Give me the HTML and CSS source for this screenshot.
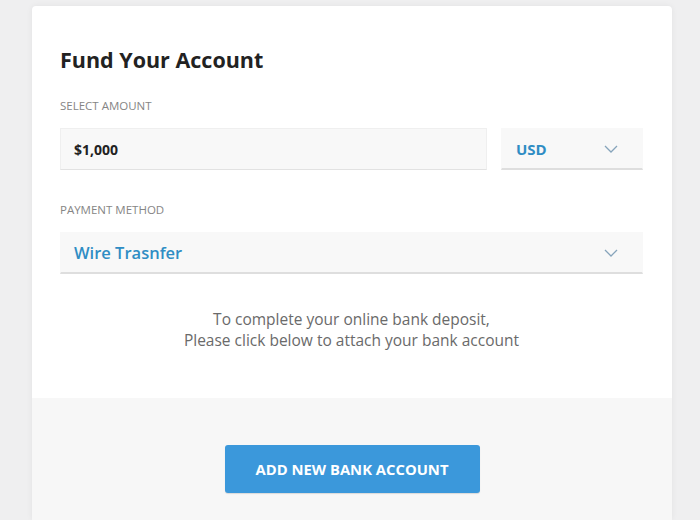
FILE: index.html
```html
<!DOCTYPE html>
<html lang="en">
<head>
    <meta charset="UTF-8">
    <meta name="viewport" content="width=device-width, initial-scale=1.0">
    <title>Fund Your Account</title>
    <link rel="stylesheet" href="styles.css">
</head>
<body>

    <div class="card">
        <div class="card-body">
            <h2 class="title">Fund Your Account</h2>

            <label class="field-label">Select Amount</label>
            <div class="amount-row">
                <div class="input-box amount">$1,000</div>
                <div class="input-box select currency">
                    <span>USD</span>
                    <svg class="chevron" width="14" height="8" viewBox="0 0 14 8"><path d="M1 1l6 6 6-6" fill="none" stroke="#86a4bb" stroke-width="1.3"/></svg>
                </div>
            </div>

            <label class="field-label">Payment Method</label>
            <div class="input-box select method">
                <span>Wire Trasnfer</span>
                <svg class="chevron" width="14" height="8" viewBox="0 0 14 8"><path d="M1 1l6 6 6-6" fill="none" stroke="#86a4bb" stroke-width="1.3"/></svg>
            </div>

            <p class="note">To complete your online bank deposit,<br>Please click below to attach your bank account</p>
        </div>

        <div class="card-footer">
            <button class="add-btn">ADD NEW BANK ACCOUNT</button>
        </div>
    </div>

</body>
</html>
```

FILE: styles.css
```css
body {
    font-family: "Open Sans", Arial, sans-serif;
    background-color: #efeff0;
    margin: 0;
    height: 520px;
    overflow: hidden;
}
.card {
    width: 640px;
    margin: 6px 0 0 32px;
    background-color: white;
    border-radius: 4px 4px 0 0;
    box-shadow: 0 0 6px rgba(0, 0, 0, 0.06);
    height: 514px;
    display: flex;
    flex-direction: column;
}
.card-body {
    padding: 40px 29px 0 28px;
}
.title {
    margin: 0 0 25px 0;
    font-size: 21.5px;
    line-height: 27px;
    font-weight: 700;
    color: #222;
}
.field-label {
    display: block;
    font-size: 11.5px;
    line-height: 16px;
    text-transform: uppercase;
    color: #858585;
    margin-bottom: 14px;
}
.amount-row {
    display: flex;
    gap: 14px;
    margin-bottom: 32px;
}
.input-box {
    box-sizing: border-box;
    height: 42px;
    background-color: #f8f8f8;
    border: 1px solid #efefef;
    border-bottom-color: #e2e2e2;
    display: flex;
    align-items: center;
    padding: 0 24px 0 13px;
}
.amount {
    flex: 1;
    font-size: 14px;
    font-weight: 700;
    color: #222;
}
.select {
    justify-content: space-between;
    color: #2f8dc4;
    border-left-color: #f8f8f8;
    border-right-color: #f8f8f8;
    border-top-color: #f8f8f8;
    border-bottom: 2px solid #dedede;
}
.currency {
    width: 142px;
    font-size: 15px;
    font-weight: 700;
    padding-left: 14px;
}
.method {
    font-size: 16.5px;
    font-weight: 600;
}
.chevron {
    display: block;
}
.note {
    margin: 35px 0 47px 0;
    text-align: center;
    font-size: 15.5px;
    line-height: 21px;
    color: #6a6a6a;
}
.card-footer {
    flex: 1;
    background-color: #f7f7f7;
    padding-top: 47px;
    text-align: center;
}
.add-btn {
    width: 255px;
    height: 48px;
    background-color: #3b98db;
    color: white;
    border: none;
    border-radius: 3px;
    box-shadow: 0 1px 1px rgba(0, 0, 0, 0.12);
    font-family: "Open Sans", Arial, sans-serif;
    font-size: 14.8px;
    font-weight: 700;
    cursor: pointer;
}
```
